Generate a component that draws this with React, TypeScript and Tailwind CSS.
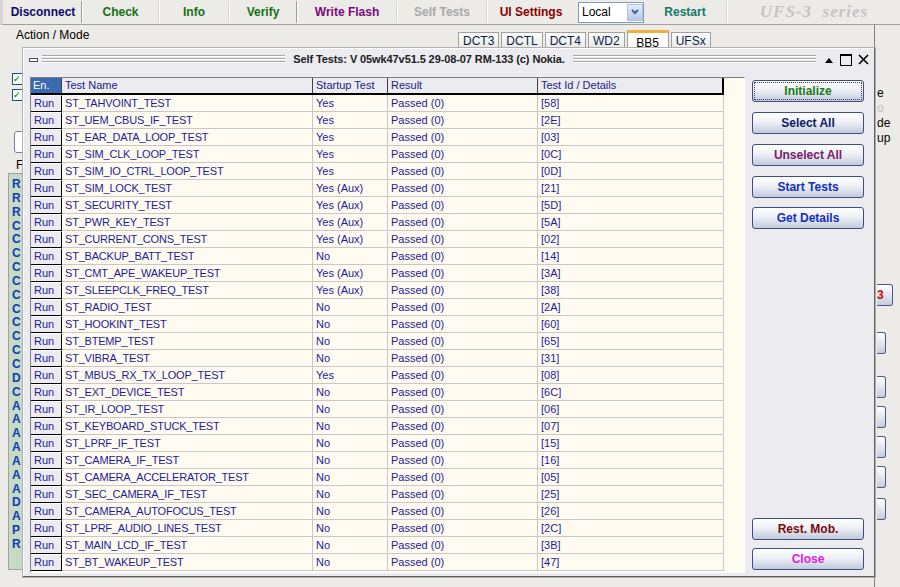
const tests: [string, string, string][] = [
  ["ST_TAHVOINT_TEST", "Yes", "58"],
  ["ST_UEM_CBUS_IF_TEST", "Yes", "2E"],
  ["ST_EAR_DATA_LOOP_TEST", "Yes", "03"],
  ["ST_SIM_CLK_LOOP_TEST", "Yes", "0C"],
  ["ST_SIM_IO_CTRL_LOOP_TEST", "Yes", "0D"],
  ["ST_SIM_LOCK_TEST", "Yes (Aux)", "21"],
  ["ST_SECURITY_TEST", "Yes (Aux)", "5D"],
  ["ST_PWR_KEY_TEST", "Yes (Aux)", "5A"],
  ["ST_CURRENT_CONS_TEST", "Yes (Aux)", "02"],
  ["ST_BACKUP_BATT_TEST", "No", "14"],
  ["ST_CMT_APE_WAKEUP_TEST", "Yes (Aux)", "3A"],
  ["ST_SLEEPCLK_FREQ_TEST", "Yes (Aux)", "38"],
  ["ST_RADIO_TEST", "No", "2A"],
  ["ST_HOOKINT_TEST", "No", "60"],
  ["ST_BTEMP_TEST", "No", "65"],
  ["ST_VIBRA_TEST", "No", "31"],
  ["ST_MBUS_RX_TX_LOOP_TEST", "Yes", "08"],
  ["ST_EXT_DEVICE_TEST", "No", "6C"],
  ["ST_IR_LOOP_TEST", "No", "06"],
  ["ST_KEYBOARD_STUCK_TEST", "No", "07"],
  ["ST_LPRF_IF_TEST", "No", "15"],
  ["ST_CAMERA_IF_TEST", "No", "16"],
  ["ST_CAMERA_ACCELERATOR_TEST", "No", "05"],
  ["ST_SEC_CAMERA_IF_TEST", "No", "25"],
  ["ST_CAMERA_AUTOFOCUS_TEST", "No", "26"],
  ["ST_LPRF_AUDIO_LINES_TEST", "No", "2C"],
  ["ST_MAIN_LCD_IF_TEST", "No", "3B"],
  ["ST_BT_WAKEUP_TEST", "No", "47"],
]

const sideLetters = "RRRCCCCCCCCCCCDCAAAAAAADAPR".split("")

const ToolSep = ({ strong }: { strong?: boolean }) => (
  <div className={`h-[22px] w-[2px] border-l ${strong ? "border-l-[#9a9a9a]" : "border-l-[#d6d6d6]"} border-r border-r-white`} />
)

const Tool = ({ label, color, w }: { label: string; color: string; w: string }) => (
  <div className={`${w} flex items-center justify-center text-[12px] font-bold ${color}`}>{label}</div>
)

const Stripes = () => (
  <div className="flex-1 h-[9px] bg-[repeating-linear-gradient(to_bottom,#a8a8a8_0px,#a8a8a8_1px,#ffffff_1px,#ffffff_2px,transparent_2px,transparent_3px)]" />
)

const DlgButton = ({ label, color, focus }: { label: string; color: string; focus?: boolean }) => (
  <div className="h-[22px] w-[112px] rounded-[3px] border border-[#3f4f80] bg-[linear-gradient(to_bottom,#ffffff_0%,#eef0f6_45%,#c2cadc_100%)] p-[1px]">
    <div className={`h-full w-full flex items-center justify-center text-[12px] font-bold ${color} ${focus ? "border border-dotted border-[#404060]" : ""}`}>
      {label}
    </div>
  </div>
)

const SmallEdgeBtn = () => (
  <div className="h-[22px] w-[9px] rounded-r-[3px] border border-l-0 border-[#4a5a88] bg-[linear-gradient(to_bottom,#ffffff,#c6cddd)]" />
)

export default function App() {
  return (
    <div className="relative w-[900px] h-[587px] overflow-hidden bg-[#ecebe8] font-['Liberation_Sans',Arial,sans-serif] text-black">
      {/* toolbar */}
      <div className="flex h-[25px] items-center border-b border-b-[#a0a0a0] border-l-[3px] border-l-[#d8d8d8] pl-[2px]">
        <Tool label="Disconnect" color="text-[#0c0c6a]" w="w-[76px]" />
        <ToolSep strong />
        <Tool label="Check" color="text-[#167016]" w="w-[75px]" />
        <ToolSep />
        <Tool label="Info" color="text-[#167016]" w="w-[68px]" />
        <ToolSep />
        <Tool label="Verify" color="text-[#167016]" w="w-[66px]" />
        <ToolSep strong />
        <Tool label="Write Flash" color="text-[#7a0a7a]" w="w-[98px]" />
        <ToolSep />
        <Tool label="Self Tests" color="text-[#a8a8a8]" w="w-[88px]" />
        <ToolSep />
        <Tool label="UI Settings" color="text-[#880000]" w="w-[86px]" />
        <div className="ml-[4px] flex h-[21px] w-[66px] items-center border border-[#7f9db9] bg-white">
          <span className="flex-1 pl-[3px] text-[12px]">Local</span>
          <div className="flex h-[17px] w-[16px] items-center justify-center border border-[#b0c0e0] bg-[linear-gradient(to_bottom,#e4ecfc,#b8c8ec)]">
            <svg width="8" height="6" viewBox="0 0 8 6"><path d="M1 1 L4 4 L7 1" stroke="#4d6185" strokeWidth="2" fill="none" /></svg>
          </div>
        </div>
        <Tool label="Restart" color="text-[#137a6a]" w="w-[82px]" />
        <ToolSep />
        <div className="flex-1 text-center font-['Liberation_Serif',serif] italic font-bold text-[17px] tracking-[1px] text-[#c4c4c4]">UFS-3&nbsp; series</div>
      </div>

      {/* background content */}
      <div className="flex h-[562px]">
        <div className="flex w-[24px] flex-col pl-[8px] pt-[4px]">
          <div className="h-[12px] w-[80px] text-[12px] leading-[12px] whitespace-nowrap pl-[8px]">Action / Mode</div>
          <div className="mt-[32px] flex flex-col gap-[4px] pl-[4px]">
            <div className="h-[12px] w-[12px] border border-[#1c5180] bg-white text-[9px] leading-[10px] text-[#21a121] font-bold">✓</div>
            <div className="h-[12px] w-[12px] border border-[#1c5180] bg-white text-[9px] leading-[10px] text-[#21a121] font-bold">✓</div>
          </div>
          <div className="mt-[30px] ml-[6px] h-[22px] w-[20px] rounded-[3px] border border-[#6f7f9f] bg-white" />
          <div className="mt-[6px] pl-[8px] text-[12px] leading-[12px]">F</div>
          <div className="mt-[2px] flex h-[397px] flex-col border border-[#a0a0a0] bg-[#c6dbc6] pl-[3px] pt-[3px]">
            {sideLetters.map((l, i) => (
              <div key={i} className="h-[13.85px] text-[12px] font-bold leading-[14px] text-[#1438b8]">{l}</div>
            ))}
          </div>
        </div>
        <div className="flex-1">
          <div className="ml-[434px] mt-[5px] flex items-end gap-[2px] text-[12px]">
            {["DCT3", "DCTL", "DCT4", "WD2"].map(t => (
              <div key={t} className="flex h-[17px] items-center border border-b-0 border-[#a0a0a0] bg-[linear-gradient(to_bottom,#ffffff,#e6e6e0)] px-[4px] text-[#0c1c4c]">{t}</div>
            ))}
            <div className="flex h-[19px] w-[42px] items-start justify-center border-t-[3px] border-t-[#f0b040] border-x border-x-[#a0a0a0] bg-white pt-[1px]">BB5</div>
            <div className="flex h-[17px] items-center border border-b-0 border-[#a0a0a0] bg-[linear-gradient(to_bottom,#ffffff,#e6e6e0)] px-[4px] text-[#0c1c4c]">UFSx</div>
          </div>
        </div>
        <div className="flex w-[26px] flex-col border-l border-l-[#808080] pt-[61px] pl-[2px] text-[12px] leading-[15px]">
          <div>e</div>
          <div className="text-[#c0c0c0]">o</div>
          <div>de</div>
          <div>up</div>
          <div className="mt-[138px] flex h-[22px] w-[16px] items-center rounded-r-[3px] border border-l-0 border-[#4a5a88] bg-[linear-gradient(to_bottom,#ffffff,#c6cddd)] text-[12px] font-bold text-[#e00000]">3</div>
          <div className="mt-[26px] flex flex-col gap-[8px]">
            <SmallEdgeBtn />
            <div className="mt-[14px]"><SmallEdgeBtn /></div>
            <SmallEdgeBtn />
            <SmallEdgeBtn />
            <SmallEdgeBtn />
            <div className="mt-[2px]"><SmallEdgeBtn /></div>
          </div>
        </div>
      </div>

      {/* Self Tests window */}
      <div className="absolute left-[22px] top-[47px] flex h-[531px] w-[854px] flex-col border border-[#b0b0b0] bg-[#ecebf0] shadow-[inset_-1px_-1px_0_#606060,inset_1px_1px_0_#ffffff]">
        <div className="flex h-[22px] items-center gap-[4px] px-[6px] pt-[1px]">
          <div className="h-[4px] w-[9px] border border-[#505050] bg-white" />
          <Stripes />
          <div className="px-[4px] text-[11px] font-bold text-[#202020] whitespace-nowrap tracking-[-0.1px]">Self Tests: V 05wk47v51.5 29-08-07 RM-133 (c) Nokia.</div>
          <Stripes />
          <div className="flex items-center gap-[6px] pl-[4px]">
            <svg width="10" height="8" viewBox="0 0 10 8"><path d="M1 7 L5 2 L9 7 Z" fill="#000" /></svg>
            <div className="h-[12px] w-[12px] border-[1.5px] border-black border-t-[2.5px]" />
            <svg width="11" height="11" viewBox="0 0 11 11"><path d="M1 1 L10 10 M10 1 L1 10" stroke="#000" strokeWidth="1.6" /></svg>
          </div>
        </div>

        <div className="flex flex-1 pt-[7px]">
          {/* table */}
          <div className="ml-[7px] h-[496px] w-[715px] border border-t-[#808080] border-l-[#808080] border-b-white border-r-white bg-[#fffbf0]">
            <div className="flex h-[17px] w-[693px] border-b-[2px] border-b-black text-[11px] text-[#1c1c8a]">
              <div className="w-[31px] border-r border-r-[#404040] bg-[#3c6ab0] pl-[2px] leading-[15px] text-white">En.</div>
              <div className="w-[251px] border-r border-r-[#404040] bg-[#ecebf0] pl-[3px] leading-[15px]">Test Name</div>
              <div className="w-[75px] border-r border-r-[#404040] bg-[#ecebf0] pl-[3px] leading-[15px]">Startup Test</div>
              <div className="w-[150px] border-r border-r-[#404040] bg-[#ecebf0] pl-[3px] leading-[15px]">Result</div>
              <div className="w-[186px] border-r-[2px] border-r-black bg-[#ecebf0] pl-[3px] leading-[15px]">Test Id / Details</div>
            </div>
            {tests.map(([name, startup, id]) => (
              <div key={name} className="flex h-[17px] text-[11px] leading-[16px] text-[#1c1c9a]">
                <div className="w-[31px] border-r border-b border-r-black border-b-black border-t border-t-white bg-[#ecebf0] pl-[3px] leading-[14px]">Run</div>
                <div className="w-[251px] border-r border-b border-[#c8c8c8] pl-[3px] tracking-[-0.2px]">{name}</div>
                <div className="w-[75px] border-r border-b border-[#c8c8c8] pl-[3px]">{startup}</div>
                <div className="w-[150px] border-r border-b border-[#c8c8c8] pl-[3px]">Passed (0)</div>
                <div className="w-[186px] border-r border-b border-[#c8c8c8] pl-[3px]">[{id}]</div>
              </div>
            ))}
          </div>

          {/* side buttons */}
          <div className="ml-[7px] flex w-[112px] flex-col pt-[3px]">
            <div className="flex flex-col gap-[10px]">
              <DlgButton label="Initialize" color="text-[#1a7a1a]" focus />
              <DlgButton label="Select All" color="text-[#0c1a6a]" />
              <DlgButton label="Unselect All" color="text-[#7a1a6a]" />
              <DlgButton label="Start Tests" color="text-[#1030c0]" />
              <div className="-mt-[1px]"><DlgButton label="Get Details" color="text-[#1030c0]" /></div>
            </div>
            <div className="mt-auto mb-[7px] flex flex-col gap-[8px]">
              <DlgButton label="Rest. Mob." color="text-[#7a0a0a]" />
              <DlgButton label="Close" color="text-[#e020e0]" />
            </div>
          </div>
        </div>
      </div>
    </div>
  )
}
